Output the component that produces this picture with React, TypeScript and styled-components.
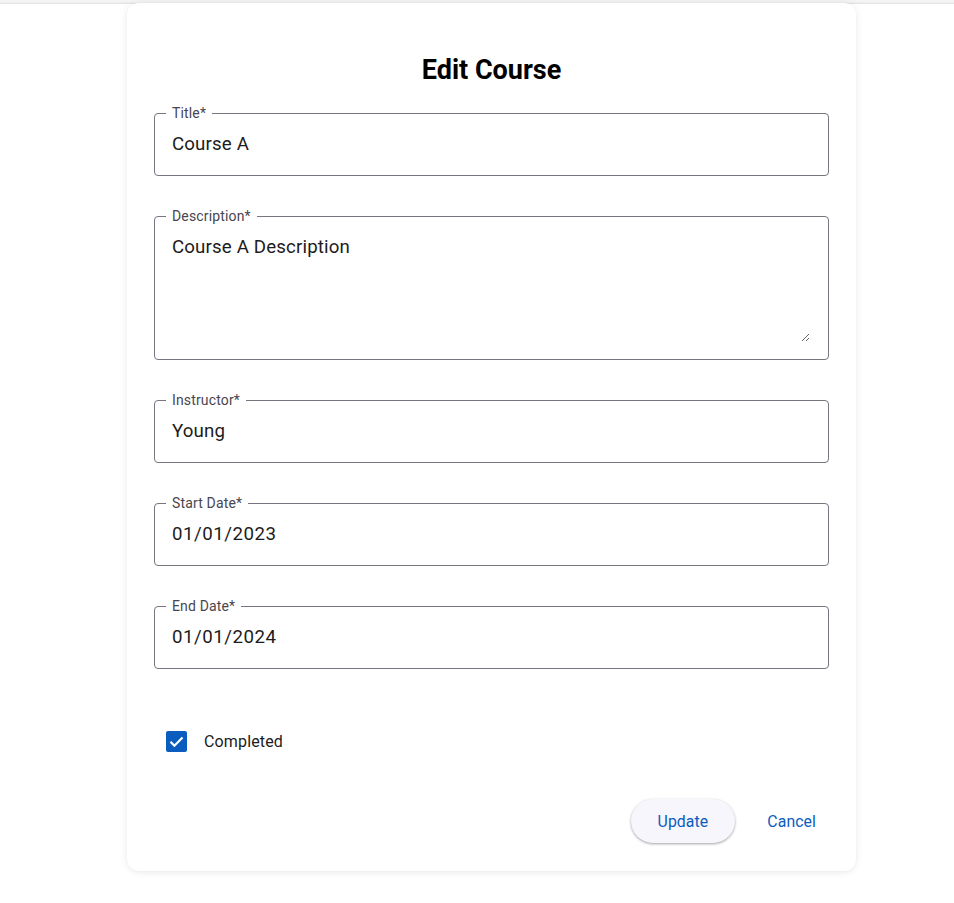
import React from "react";
import styled, { createGlobalStyle } from "styled-components";

const Global = createGlobalStyle`
  html, body { margin: 0; padding: 0; background: #ffffff; }
  body { font-family: Roboto, "Noto Sans", "Liberation Sans", sans-serif; }
  * { box-sizing: border-box; }
`;

const TopShade = styled.div`
  height: 4px;
  background: linear-gradient(#f6f6f6, #efefef);
  border-bottom: 1px solid #e4e4e4;
`;

const Page = styled.div`
  padding: 0 0 28px 127px;
  margin-top: -1px;
`;

const Card = styled.form`
  width: 729px;
  background: #ffffff;
  border-radius: 12px;
  box-shadow: 0 0 10px rgba(0, 0, 0, 0.07), 0 2px 4px rgba(0, 0, 0, 0.03);
  padding: 51px 27px 28px 27px;
  display: flex;
  flex-direction: column;
`;

const Heading = styled.h2`
  margin: 0 0 19px 0;
  text-align: center;
  font-size: 27px;
  line-height: 32px;
  font-weight: 700;
  color: #000000;
`;

const Fields = styled.div`
  display: flex;
  flex-direction: column;
  gap: 32px;
`;

const FieldBox = styled.fieldset<{ $multi?: boolean }>`
  margin: 0;
  border: 1px solid #79747e;
  border-radius: 4px;
  padding: 0 18px ${(p) => (p.$multi ? "17px" : "9px")} 17px;
  min-width: 0;
`;

const Legend = styled.legend`
  font-size: 14px;
  line-height: 16px;
  letter-spacing: 0.15px;
  color: #49454f;
  padding: 0 6px;
  margin-left: -6px;
`;

const Input = styled.input<{ $spacing?: number }>`
  display: block;
  width: 100%;
  height: 45px;
  border: none;
  outline: none;
  padding: 1px 0 0 0;
  background: transparent;
  font-family: Roboto, "Noto Sans", sans-serif;
  font-size: 18.7px;
  letter-spacing: ${(p) => p.$spacing ?? 0.15}px;
  color: #1d1b20;
`;

const TextArea = styled.textarea`
  display: block;
  width: 100%;
  height: 106px;
  margin-top: 12px;
  border: none;
  outline: none;
  padding: 0;
  background: transparent;
  resize: vertical;
  font-family: Roboto, "Noto Sans", sans-serif;
  font-size: 18.7px;
  line-height: 23px;
  letter-spacing: 0.15px;
  color: #1d1b20;
`;

const CheckRow = styled.label`
  display: flex;
  align-items: center;
  height: 42px;
  margin-top: 51px;
  padding-left: 12px;
  gap: 17px;
  font-size: 16px;
  letter-spacing: 0.15px;
  color: #1d1b20;
  cursor: pointer;
`;

const CheckBox = styled.span`
  width: 21px;
  height: 21px;
  border-radius: 2px;
  background: #0b5cbf;
  display: flex;
  align-items: center;
  justify-content: center;
`;

const Actions = styled.div`
  display: flex;
  justify-content: flex-end;
  align-items: center;
  gap: 19px;
  margin-top: 37px;
`;

const Button = styled.button<{ $elevated?: boolean }>`
  height: 44px;
  padding: 0 ${(p) => (p.$elevated ? "27px" : "13px")};
  border: none;
  border-radius: 22px;
  font-family: Roboto, "Noto Sans", sans-serif;
  font-size: 15.8px;
  font-weight: 400;
  letter-spacing: 0.1px;
  color: #0b5cbf;
  background: ${(p) => (p.$elevated ? "#f7f6fc" : "transparent")};
  box-shadow: ${(p) =>
    p.$elevated
      ? "0 1px 3px rgba(0,0,0,0.28), 0 1px 2px rgba(0,0,0,0.1)"
      : "none"};
  cursor: pointer;
`;

type FieldProps = { label: string; value: string; spacing?: number };

const Field = ({ label, value, spacing }: FieldProps) => (
  <FieldBox>
    <Legend>{label}</Legend>
    <Input defaultValue={value} $spacing={spacing} />
  </FieldBox>
);

export default function App() {
  return (
    <>
      <Global />
      <TopShade />
      <Page>
        <Card onSubmit={(e) => e.preventDefault()}>
          <Heading>Edit Course</Heading>
          <Fields>
            <Field label="Title*" value="Course A" />
            <FieldBox $multi>
              <Legend>Description*</Legend>
              <TextArea defaultValue="Course A Description" />
            </FieldBox>
            <Field label="Instructor*" value="Young" />
            <Field label="Start Date*" value="01/01/2023" spacing={0.5} />
            <Field label="End Date*" value="01/01/2024" spacing={0.5} />
          </Fields>
          <CheckRow>
            <CheckBox>
              <svg width="17" height="17" viewBox="0 0 24 24">
                <path
                  d="M3.5 12.5l5.5 5.5L20.5 6.5"
                  fill="none"
                  stroke="#ffffff"
                  strokeWidth="3"
                />
              </svg>
            </CheckBox>
            Completed
          </CheckRow>
          <Actions>
            <Button type="button" $elevated>
              Update
            </Button>
            <Button type="button">Cancel</Button>
          </Actions>
        </Card>
      </Page>
    </>
  );
}
